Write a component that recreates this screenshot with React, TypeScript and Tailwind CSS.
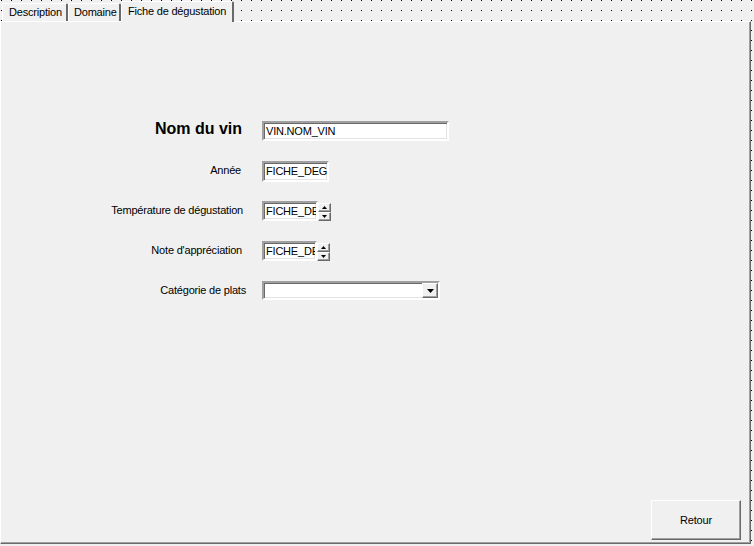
import React from "react";

function UpArrow() {
  return (
    <svg width="5" height="3" viewBox="0 0 5 3" className="block">
      <polygon points="2.5,0 5,3 0,3" fill="#000" />
    </svg>
  );
}
function DownArrow() {
  return (
    <svg width="5" height="3" viewBox="0 0 5 3" className="block">
      <polygon points="0,0 5,0 2.5,3" fill="#000" />
    </svg>
  );
}

function Spinner() {
  return (
    <div className="flex flex-col mt-[2px]">
      <div className="w-[13px] h-[9px] bg-[#f0f0f0] border border-t-white border-l-white border-b-[#696969] border-r-[#696969] shadow-[inset_-1px_-1px_0_#a0a0a0] flex items-center justify-center">
        <UpArrow />
      </div>
      <div className="w-[13px] h-[9px] bg-[#f0f0f0] border border-t-white border-l-white border-b-[#696969] border-r-[#696969] shadow-[inset_-1px_-1px_0_#a0a0a0] flex items-center justify-center">
        <DownArrow />
      </div>
    </div>
  );
}

export default function App() {
  return (
    <div className="w-[754px] h-[546px] overflow-hidden bg-[#f0f0f0] [background-image:conic-gradient(from_270deg_at_1px_1px,#000_90deg,transparent_0)] [background-size:10px_10px] [background-position:1px_0px] font-[Liberation_Sans,Arial,sans-serif] text-[11px] tracking-[-0.2px] text-black flex flex-col">
      {/* Tabs */}
      <div className="h-[21px] flex items-end pl-[2px]">
        <div className="w-[66px] h-[18px] bg-[#f0f0f0] border-l border-t border-l-white border-t-white border-r-2 border-r-[#696969] rounded-t-[2px] pl-[6px] pt-[3px] leading-none whitespace-nowrap">
          Description
        </div>
        <div className="w-[53px] h-[18px] bg-[#f0f0f0] border-l border-t border-l-white border-t-white border-r-2 border-r-[#696969] rounded-t-[2px] pl-[5px] pt-[3px] leading-none whitespace-nowrap">
          Domaine
        </div>
        <div className="relative z-10 -mb-px w-[113px] h-[21px] bg-[#f0f0f0] border-l border-t border-l-white border-t-white border-r-2 border-r-[#696969] rounded-t-[2px] pl-[6px] pt-[4px] leading-none whitespace-nowrap">
          Fiche de dégustation
        </div>
      </div>

      {/* Panel */}
      <div className="w-[751px] h-[523px] bg-[#f0f0f0] border border-t-white border-l-white border-r-[#696969] border-b-[#696969] shadow-[inset_-1px_-1px_0_#a0a0a0] flex flex-col">
        <div className="pt-[99px] flex flex-col">
          {/* Nom du vin */}
          <div className="h-[40px] flex items-start">
            <div className="w-[245px] pr-[4px] text-right text-[16px] font-bold leading-none tracking-normal">
              Nom du vin
            </div>
            <div className="ml-[16px] w-[187px] h-[20px] bg-white border-2 border-t-[#a0a0a0] border-l-[#a0a0a0] border-b-white border-r-white shadow-[inset_1px_1px_0_#696969,inset_-1px_-1px_0_#e3e3e3] flex items-center pl-[2px] overflow-hidden whitespace-nowrap">
              VIN.NOM_VIN
            </div>
          </div>

          {/* Année */}
          <div className="h-[40px] flex items-start">
            <div className="w-[245px] pr-[5px] text-right leading-none mt-[4px]">Année</div>
            <div className="ml-[16px] w-[67px] h-[21px] bg-white border-2 border-t-[#a0a0a0] border-l-[#a0a0a0] border-b-white border-r-white shadow-[inset_1px_1px_0_#696969,inset_-1px_-1px_0_#e3e3e3] flex items-center pl-[2px] overflow-hidden whitespace-nowrap">
              FICHE_DEG
            </div>
          </div>

          {/* Température */}
          <div className="h-[40px] flex items-start">
            <div className="w-[245px] pr-[3px] text-right leading-none mt-[4px] whitespace-nowrap">
              Température de dégustation
            </div>
            <div className="ml-[16px] flex items-start">
              <div className="w-[56px] h-[20px] bg-white border-2 border-t-[#a0a0a0] border-l-[#a0a0a0] border-b-white border-r-white shadow-[inset_1px_1px_0_#696969,inset_-1px_-1px_0_#e3e3e3] flex items-center pl-[2px] overflow-hidden whitespace-nowrap">
                FICHE_DE
              </div>
              <Spinner />
            </div>
          </div>

          {/* Note */}
          <div className="h-[40px] flex items-start">
            <div className="w-[245px] pr-[4px] text-right leading-none mt-[4px] whitespace-nowrap">
              Note d'appréciation
            </div>
            <div className="ml-[16px] flex items-start">
              <div className="w-[55px] h-[20px] bg-white border-2 border-t-[#a0a0a0] border-l-[#a0a0a0] border-b-white border-r-white shadow-[inset_1px_1px_0_#696969,inset_-1px_-1px_0_#e3e3e3] flex items-center pl-[2px] overflow-hidden whitespace-nowrap">
                FICHE_DE
              </div>
              <Spinner />
            </div>
          </div>

          {/* Catégorie */}
          <div className="h-[40px] flex items-start">
            <div className="w-[245px] pr-0 text-right leading-none mt-[4px] whitespace-nowrap">
              Catégorie de plats
            </div>
            <div className="ml-[16px] w-[178px] h-[19px] bg-white border-2 border-t-[#a0a0a0] border-l-[#a0a0a0] border-b-white border-r-white shadow-[inset_1px_1px_0_#696969,inset_-1px_-1px_0_#e3e3e3] flex items-stretch justify-end">
              <div className="w-[16px] bg-[#f0f0f0] border border-t-white border-l-white border-b-[#696969] border-r-[#696969] shadow-[inset_-1px_-1px_0_#a0a0a0] flex items-center justify-center">
                <svg width="7" height="4" viewBox="0 0 7 4" className="block">
                  <polygon points="0,0 7,0 3.5,4" fill="#000" />
                </svg>
              </div>
            </div>
          </div>
        </div>

        <div className="flex-1" />

        <div className="flex justify-end pr-[9px] pb-[3px]">
          <div className="w-[90px] h-[40px] bg-[#f0f0f0] border border-t-white border-l-white border-r-[#696969] border-b-[#696969] shadow-[inset_-1px_-1px_0_#a0a0a0] flex items-center justify-center">
            Retour
          </div>
        </div>
      </div>
    </div>
  );
}
